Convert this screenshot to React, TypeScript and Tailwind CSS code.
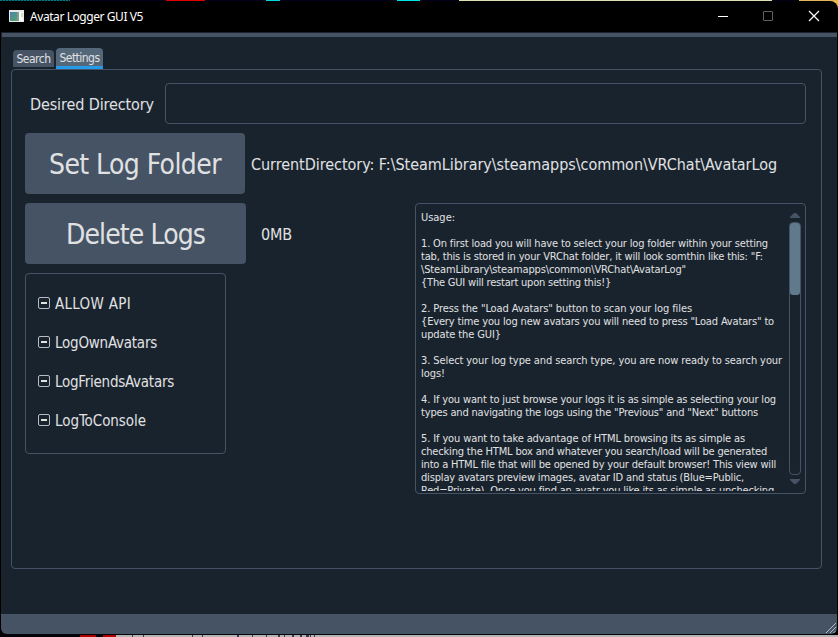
import { useLayoutEffect, useRef, useState } from "react";

/** One line of text whose tracking is computed so that it spans `width` pixels. */
function Line({ text, width, className = "" }: { text: string; width: number; className?: string }) {
  const ref = useRef<HTMLSpanElement>(null);
  const [spacing, setSpacing] = useState(0);
  useLayoutEffect(() => {
    if (ref.current) {
      const natural = ref.current.getBoundingClientRect().width;
      setSpacing((width - natural) / text.length);
    }
  }, []);
  return (
    <span ref={ref} className={`inline-block whitespace-pre ${className}`} style={{ letterSpacing: spacing }}>
      {text}
    </span>
  );
}

const usage: [string, number][] = [
  ["Usage:", 34],
  ["", 0],
  ["1. On first load you will have to select your log folder within your setting", 347],
  ["tab, this is stored in your VRChat folder, it will look somthin like this: \"F:", 342],
  ["\\SteamLibrary\\steamapps\\common\\VRChat\\AvatarLog\"", 265],
  ["{The GUI will restart upon setting this!}", 190],
  ["", 0],
  ["2. Press the \"Load Avatars\" button to scan your log files", 271],
  ["{Every time you log new avatars you will need to press \"Load Avatars\" to", 353],
  ["update the GUI}", 80],
  ["", 0],
  ["3. Select your log type and search type, you are now ready to search your", 361],
  ["logs!", 24],
  ["", 0],
  ["4. If you want to just browse your logs it is as simple as selecting your log", 355],
  ["types and navigating the logs using the \"Previous\" and \"Next\" buttons", 337],
  ["", 0],
  ["5. If you want to take advantage of HTML browsing its as simple as", 324],
  ["checking the HTML box and whatever you search/load will be generated", 346],
  ["into a HTML file that will be opened by your default browser! This view will", 355],
  ["display avatars preview images, avatar ID and status (Blue=Public,", 323],
  ["Red=Private). Once you find an avatr you like its as simple as unchecking", 353],
];

const options: [string, number][] = [
  ["ALLOW API", 76],
  ["LogOwnAvatars", 102],
  ["LogFriendsAvatars", 119],
  ["LogToConsole", 91],
];

function TitleBar() {
  return (
    <header className="flex h-[31px] items-center rounded-tr-lg bg-black pl-[9px] font-['Noto_Sans',sans-serif] text-white">
      <svg width="15" height="12" viewBox="0 0 15 12" className="-mt-px">
        <defs>
          <linearGradient id="pane" x1="0" y1="0" x2="1" y2="1">
            <stop offset="0" stopColor="#4d83b5" />
            <stop offset="1" stopColor="#55a468" />
          </linearGradient>
        </defs>
        <rect width="15" height="12" fill="#e9e9e9" />
        <rect x="1" y="2" width="7" height="9" fill="url(#pane)" />
        <rect x="8" y="2" width="2" height="9" fill="#8b9993" />
        <rect x="10" y="2" width="4" height="9" fill="#fafafa" />
        <rect x="12" y="3" width="2" height="4" fill="#cfdfcf" />
      </svg>
      <Line text="Avatar Logger GUI V5" width={113} className="ml-[6px] text-[12px]" />
      <svg width="102" height="12" viewBox="0 0 102 12" className="-mt-px mr-[18px] ml-auto" fill="none">
        <path d="M0 6.5h10" stroke="#fff" />
        <rect x="45.5" y="1.5" width="9" height="9" rx=".5" stroke="#606060" />
        <path d="M91 1l10 10M101 1L91 11" stroke="#fff" strokeWidth="1.2" />
      </svg>
    </header>
  );
}

function ScrollBar() {
  return (
    <div className="flex w-3 flex-col items-center pt-[9px]">
      <svg width="10" height="5" viewBox="0 0 10 5" className="shrink-0">
        <path d="M0 5V4l4-4h2l4 4v1z" fill="#455364" />
      </svg>
      <div className="mt-1 h-[253px] w-3 shrink-0 rounded border border-[#455364]">
        <div className="h-[72px] rounded-[3px] bg-[#60798b]" />
      </div>
      <svg width="10" height="5" viewBox="0 0 10 5" className="mt-1 shrink-0">
        <path d="M0 0v1l4 4h2l4-4V0z" fill="#455364" />
      </svg>
    </div>
  );
}

export default function App() {
  return (
    <div className="flex h-[637px] w-[838px] flex-col bg-black font-['DejaVu_Sans_Condensed','DejaVu_Sans',sans-serif] text-[#e0e1e3] [font-stretch:condensed]">
      <div className="flex h-px shrink-0 bg-[#000018]">
        <div className="w-[70px] bg-[repeating-linear-gradient(90deg,#007f87_0_2px,#002b35_2px_3px)]" />
        <div className="ml-[96px] w-[39px] bg-[#e00000]" />
        <div className="ml-[61px] w-[14px] bg-[#00d9dd]" />
        <div className="ml-[117px] w-[23px] bg-[#00e5e9]" />
        <div className="ml-[39px] w-[313px] bg-[#dedfb5]" />
        <div className="ml-[27px] flex-1 bg-[#e4b55c]" />
      </div>
      <div className="bg-[#efb93e]">
        <TitleBar />
      </div>
      <div className="mx-px flex h-[602px] flex-col overflow-hidden rounded-b-md bg-[#19232d]">
        <div className="mt-px ml-px h-1 shrink-0 bg-[#455364]" />
        <nav className="mt-[11px] ml-3 flex h-[21px] shrink-0 items-start gap-[2px] text-[12px]">
          <div className="mt-[2px] flex h-[17px] w-[41px] items-center justify-center rounded-t bg-[#455364]">
            <Line text="Search" width={34} />
          </div>
          <div className="flex h-[21px] w-[47px] items-center justify-center rounded-t border-b-[3px] border-[#259ae9] bg-[#54687a] pt-[2px]">
            <Line text="Settings" width={40} />
          </div>
        </nav>
        <main className="ml-[10px] h-[500px] w-[811px] shrink-0 rounded border border-[#455364] pt-[13px] pl-[13px]">
          <div className="flex items-center">
            <label className="flex w-[140px] pt-[2px] pl-[5px]">
              <Line text="Desired Directory" width={124} className="text-[16px]" />
            </label>
            <input className="h-[41px] w-[641px] rounded border border-[#455364] bg-transparent outline-none" />
          </div>
          <div className="mt-[9px] flex items-center">
            <button className="h-[61px] w-[220px] rounded bg-[#455364]">
              <Line text="Set Log Folder" width={172} className="pt-[2px] text-[28px] leading-[59px]" />
            </button>
            <Line text="CurrentDirectory: F:\SteamLibrary\steamapps\common\VRChat\AvatarLog" width={526} className="ml-[6px] pt-[2px] text-[16px]" />
          </div>
          <div className="mt-[9px] flex">
            <section className="w-[390px]">
              <div className="flex items-center">
                <button className="h-[61px] w-[221px] rounded bg-[#455364]">
                  <Line text="Delete Logs" width={139} className="pt-[2px] text-[28px] leading-[59px]" />
                </button>
                <Line text="0MB" width={31} className="ml-[15px] pt-[2px] text-[16px]" />
              </div>
              <div className="mt-[9px] flex h-[181px] w-[201px] flex-col rounded border border-[#455364] pt-[10px] pl-3">
                {options.map(([name, width]) => (
                  <label key={name} className="flex h-[39px] items-center gap-[4px]">
                    <svg width="13" height="13" viewBox="0 0 13 13" fill="none" className="-mt-px">
                      <rect x=".5" y=".5" width="11" height="11" rx="1.5" stroke="#b5bcc5" />
                      <path d="M3 6h6" stroke="#e0e1e3" strokeWidth="2" />
                    </svg>
                    <Line text={name} width={width} className="pt-[2px] text-[15px]" />
                  </label>
                ))}
              </div>
            </section>
            <section className="flex h-[291px] w-[391px] rounded border border-[#455364]">
              <div className="h-[287px] w-[373px] overflow-hidden pt-[7px] pl-[5px] text-[11px] leading-[13px]">
                {usage.map(([text, width], i) => (
                  <div key={i} className="h-[13px]">
                    {text && <Line text={text} width={width} />}
                  </div>
                ))}
              </div>
              <ScrollBar />
            </section>
          </div>
        </main>
        <footer className="mt-auto flex h-5 shrink-0 items-end justify-end bg-[#455364]">
          <svg width="12" height="12" viewBox="0 0 12 12" stroke="#b8bfc8" strokeWidth="1">
            <path d="M1 11L11 1M5 11l6-6M8.500 11L11 8.500" />
          </svg>
        </footer>
      </div>
      <div className="mt-px flex h-[2px] bg-[#00000f]">
        <div className="ml-[80px] w-4 bg-[#b00000]" />
        <div className="ml-[7px] w-[13px] bg-[#b00000]" />
        <svg width="722" height="2" viewBox="0 0 722 2" className="shrink-0">
          <rect width="722" height="2" fill="#b5b3b5" />
          <path
            d="M16 1h1M27 1h1M76 1h1M86 1h1M121 1h2M136 1h1M150 1h1M162 1h2M168 1h1M176 1h2M184 1h2M190 1h3M194 1h1M198 1h1"
            stroke="#3b3856"
            strokeWidth="2"
          />
        </svg>
      </div>
    </div>
  );
}
